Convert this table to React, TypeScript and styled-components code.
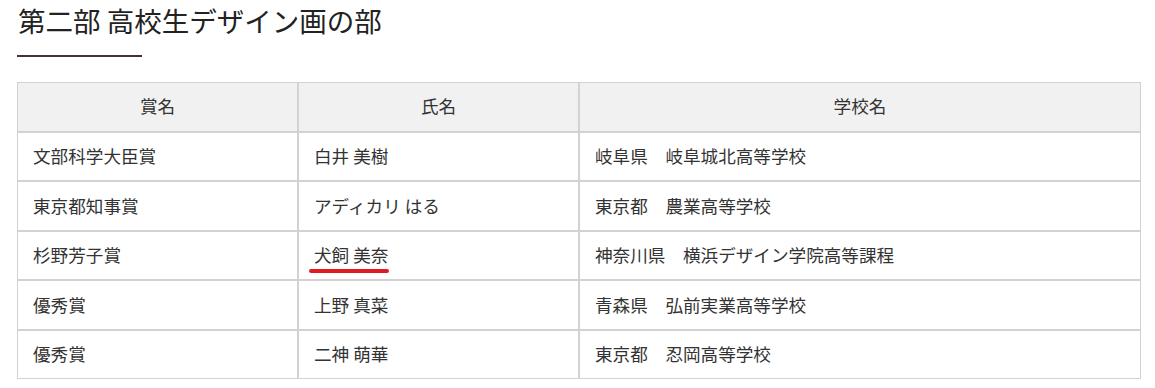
import styled, { createGlobalStyle } from "styled-components";

type Award = {
  prize: string;
  name: string;
  school: string;
  marked?: boolean;
};

const awards: Award[] = [
  { prize: "文部科学大臣賞", name: "白井 美樹", school: "岐阜県　岐阜城北高等学校" },
  { prize: "東京都知事賞", name: "アディカリ はる", school: "東京都　農業高等学校" },
  { prize: "杉野芳子賞", name: "犬飼 美奈", school: "神奈川県　横浜デザイン学院高等課程", marked: true },
  { prize: "優秀賞", name: "上野 真菜", school: "青森県　弘前実業高等学校" },
  { prize: "優秀賞", name: "二神 萌華", school: "東京都　忍岡高等学校" },
];

function App() {
  return (
    <>
      <GlobalStyle />
      <Section>
        <StyledHeading>第二部 高校生デザイン画の部</StyledHeading>
        <HeadingRule />
        <StyledTable>
          <colgroup>
            <col style={{ width: "25%" }} />
            <col style={{ width: "25%" }} />
            <col style={{ width: "50%" }} />
          </colgroup>
          <thead>
            <tr>
              <HeadCell>賞名</HeadCell>
              <HeadCell>氏名</HeadCell>
              <HeadCell>学校名</HeadCell>
            </tr>
          </thead>
          <tbody>
            {awards.map((a, i) => (
              <tr key={i}>
                <BodyCell>{a.prize}</BodyCell>
                <BodyCell>{a.marked ? <MarkedName>{a.name}</MarkedName> : a.name}</BodyCell>
                <BodyCell>{a.school}</BodyCell>
              </tr>
            ))}
          </tbody>
        </StyledTable>
      </Section>
    </>
  );
}

const GlobalStyle = createGlobalStyle`
  body {
    margin: 0;
    background: #fff;
    font-family: "Noto Sans CJK JP", "Noto Sans", sans-serif;
    color: #333;
  }
`;

const Section = styled.section`
  padding: 0 14px 0 17px;
`;
const StyledHeading = styled.h2`
  margin: 1px 0 0 1px;
  font-size: 27.5px;
  font-weight: 400;
  line-height: 39px;
  color: #222;
`;
const HeadingRule = styled.div`
  width: 125px;
  height: 2px;
  margin-top: 15px;
  background: #463232;
`;
const StyledTable = styled.table`
  width: 100%;
  margin-top: 25px;
  border-collapse: separate;
  border-spacing: 0;
  table-layout: fixed;
  font-size: 17.6px;
`;
const HeadCell = styled.th`
  height: 49.5px;
  padding: 0 15px;
  box-sizing: border-box;
  border: 1px solid #d2d2d2;
  background: #f1f1f1;
  font-weight: 400;
  text-align: center;
  line-height: 1.4;
`;
const BodyCell = styled.td`
  height: 49.6px;
  padding: 0 15px;
  box-sizing: border-box;
  border: 1px solid #d2d2d2;
  text-align: left;
  line-height: 1.4;
`;
const MarkedName = styled.span`
  position: relative;
  &::after {
    content: "";
    position: absolute;
    left: -5px;
    right: -1px;
    bottom: -6px;
    height: 4px;
    border-radius: 2px;
    background: #e01a20;
  }
`;

export default App;
